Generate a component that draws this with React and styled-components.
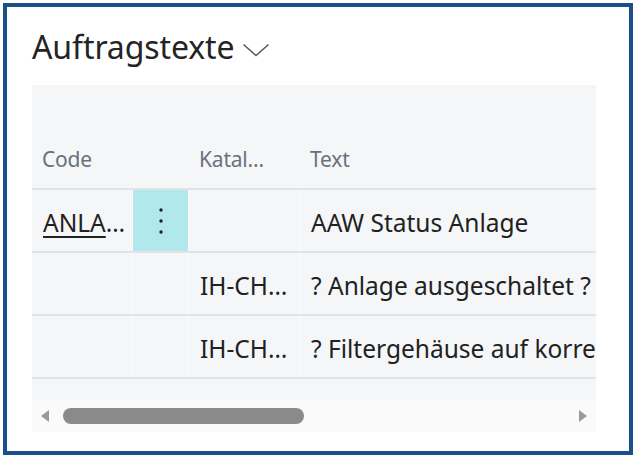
import React from "react";
import styled, { createGlobalStyle } from "styled-components";

const GlobalStyle = createGlobalStyle`
    html, body {
        margin: 0;
        padding: 0;
        background: #ffffff;
    }
    body {
        font-family: "Noto Sans", "Open Sans", Arial, sans-serif;
        color: #212121;
    }
`;

const rows = [
    { code: "ANLA", katalog: "", text: "AAW Status Anlage", active: true },
    { code: "", katalog: "IH-CH…", text: "? Anlage ausgeschaltet ?" },
    { code: "", katalog: "IH-CH…", text: "? Filtergehäuse auf korrekten Sitz prüfen" },
];

const App = () => {
    return (
        <Page>
            <GlobalStyle />
            <Frame>
                <Title>
                    Auftragstexte
                    <svg width="28" height="14" viewBox="0 0 28 14">
                        <path d="M1.5 1.5 L14 12.5 L26.5 1.5" fill="none" stroke="#5a5a5a" strokeWidth="1.6" />
                    </svg>
                </Title>
                <Grid>
                    <Viewport>
                        <HeaderRow>
                            <HeadCell>Code</HeadCell>
                            <HeadCell />
                            <HeadCell>Katal…</HeadCell>
                            <HeadCell>Text</HeadCell>
                        </HeaderRow>
                        {rows.map((row, i) => (
                            <Row key={i}>
                                <Cell>
                                    {row.code && <CodeLink>{row.code}</CodeLink>}
                                    {row.code && "…"}
                                </Cell>
                                <ActionCell active={row.active}>
                                    {row.active && (
                                        <svg width="4" height="26" viewBox="0 0 4 26">
                                            <circle cx="2" cy="2" r="1.7" fill="#1f1f2e" />
                                            <circle cx="2" cy="13" r="1.7" fill="#1f1f2e" />
                                            <circle cx="2" cy="24" r="1.7" fill="#1f1f2e" />
                                        </svg>
                                    )}
                                </ActionCell>
                                <Cell>{row.katalog}</Cell>
                                <Cell>{row.text}</Cell>
                            </Row>
                        ))}
                        <Filler />
                    </Viewport>
                    <ScrollBar>
                        <Arrow viewBox="0 0 10 12">
                            <path d="M9 0 L9 12 L1 6 Z" fill="#9a9a9a" />
                        </Arrow>
                        <Track>
                            <Thumb />
                        </Track>
                        <Arrow viewBox="0 0 10 12">
                            <path d="M1 0 L1 12 L9 6 Z" fill="#9a9a9a" />
                        </Arrow>
                    </ScrollBar>
                </Grid>
            </Frame>
        </Page>
    );
};

const Page = styled.div`
    width: 637px;
    height: 460px;
    padding: 3px 0 0 3px;
    box-sizing: border-box;
`;
const Frame = styled.div`
    width: 630px;
    height: 452px;
    box-sizing: border-box;
    border: 4px solid #1a4f8a;
    padding: 0 33px 0 25px;
    background: #ffffff;
    overflow: hidden;
`;
const Title = styled.h1`
    margin: 0;
    height: 78px;
    display: flex;
    align-items: center;
    gap: 7px;
    padding-top: 2px;
    box-sizing: border-box;
    font-size: 32px;
    line-height: 1.2;
    font-weight: 400;
    letter-spacing: -0.1px;
    color: #242424;
    svg {
        margin-top: 6px;
    }
`;
const Grid = styled.div`
    width: 564px;
    background: #f5f6f8;
    display: flex;
    flex-direction: column;
`;
const Viewport = styled.div`
    overflow: hidden;
    width: 100%;
`;
const columns = "101px 56px 111px 460px";
const HeaderRow = styled.div`
    display: grid;
    grid-template-columns: ${columns};
    height: 105px;
    border-bottom: 2px solid #e2e3e6;
    box-sizing: border-box;
    align-items: end;
`;
const HeadCell = styled.div`
    padding: 0 10px 15px 10px;
    font-size: 21px;
    color: #6b717b;
    white-space: nowrap;
    letter-spacing: -0.2px;
`;
const Row = styled.div`
    display: grid;
    grid-template-columns: ${columns};
    height: 63px;
    border-bottom: 2px solid #e2e3e6;
    box-sizing: border-box;
`;
const Cell = styled.div`
    display: flex;
    align-items: center;
    padding: 0 11px;
    padding-top: 3px;
    font-size: 24.5px;
    color: #212121;
    white-space: nowrap;
    overflow: hidden;
    border-right: 1px solid #fbfbfc;
`;
const ActionCell = styled.div`
    display: flex;
    align-items: center;
    justify-content: center;
    background: ${props => props.active ? "#b1e8eb" : "transparent"};
    border-right: 1px solid #fbfbfc;
`;
const CodeLink = styled.span`
    text-decoration: underline;
    text-underline-offset: 4px;
    text-decoration-thickness: 1.5px;
`;
const Filler = styled.div`
    height: 21px;
`;
const ScrollBar = styled.div`
    height: 32px;
    background: #fafafa;
    display: flex;
    align-items: center;
    padding: 0 8px;
    gap: 13px;
`;
const Arrow = styled.svg`
    width: 10px;
    height: 12px;
    flex: none;
`;
const Track = styled.div`
    flex: 1;
    height: 16px;
`;
const Thumb = styled.div`
    width: 241px;
    height: 16px;
    border-radius: 8px;
    background: #8a8a8a;
`;

export default App;
